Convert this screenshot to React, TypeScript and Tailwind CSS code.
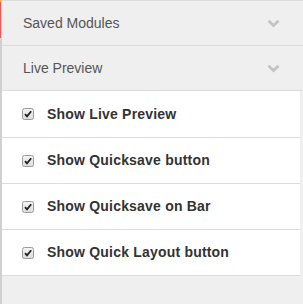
import React from 'react';

const options = [
  'Show Live Preview',
  'Show Quicksave button',
  'Show Quicksave on Bar',
  'Show Quick Layout button',
];

const Check = () => (
  <svg width="12" height="12" viewBox="0 0 12 12" className="shrink-0">
    <defs>
      <linearGradient id="cb" x1="0" y1="0" x2="0" y2="1">
        <stop offset="0" stopColor="#f4f4f4" />
        <stop offset="1" stopColor="#dcdcdc" />
      </linearGradient>
    </defs>
    <rect x="0.5" y="0.5" width="11" height="11" rx="2" fill="url(#cb)" stroke="#9a9a9a" />
    <path d="M3 6.2 L5 8.4 L9.2 3.2" fill="none" stroke="#222" strokeWidth="1.8" />
  </svg>
);

const Chevron = () => (
  <svg width="13" height="9" viewBox="0 0 13 9">
    <path d="M1.5 1.8 L6.5 6.6 L11.5 1.8" fill="none" stroke="#c4c4c4" strokeWidth="2.8" />
  </svg>
);

const Header = ({ title }: { title: string }) => (
  <div className="flex h-[45px] items-center justify-between border-b border-[#dcdcdc] bg-[#efefef] pl-[21px] pr-[23px]">
    <span className="text-[14px] text-[#555]">{title}</span>
    <Chevron />
  </div>
);

export default function App() {
  return (
    <div
      className="flex h-[304px] w-[303px] overflow-hidden bg-[#efefef]"
      style={{ fontFamily: '"Liberation Sans", Arial, sans-serif' }}
    >
      <div className="flex w-px flex-col bg-[#d0d0d0]">
        <div className="h-[2px] bg-[#f0c040]" />
        <div className="h-[36px] bg-[#e06060]" />
      </div>
      <div className="w-px bg-[#d0d0d0]" />
      <div className="flex flex-1 flex-col border-t border-[#dcdcdc]">
        <Header title="Saved Modules" />
        <Header title="Live Preview" />
        <div className="mr-[3px] bg-white">
          {options.map((o, i) => (
            <div
              key={o}
              className={`flex items-center gap-[13px] border-b border-[#dcdcdc] pl-[20px] ${i === 0 ? 'h-[47px]' : 'h-[46px]'}`}
            >
              <Check />
              <span className="text-[14px] font-bold tracking-[0.2px] text-[#333]">{o}</span>
            </div>
          ))}
        </div>
      </div>
    </div>
  );
}
